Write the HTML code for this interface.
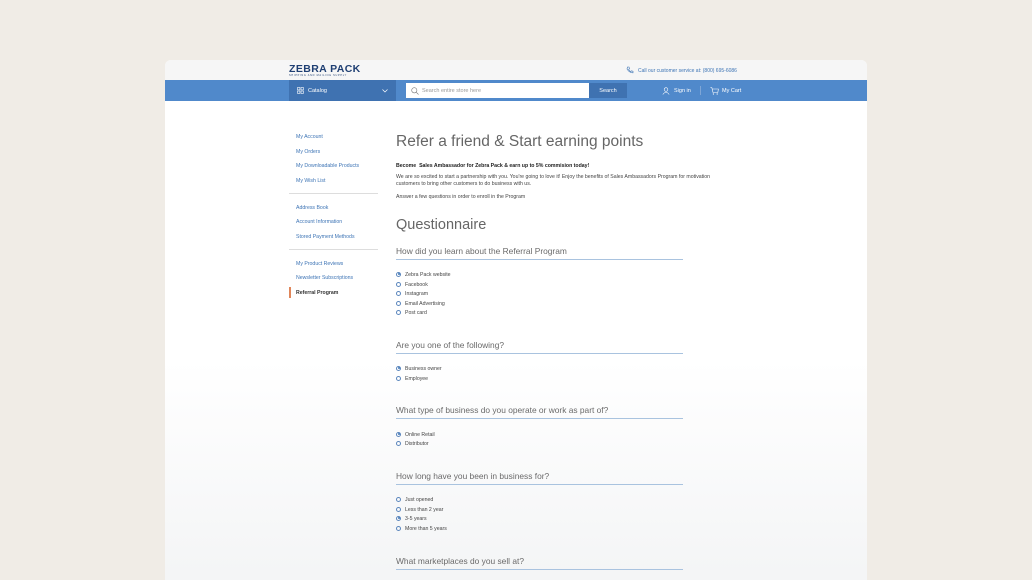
<!DOCTYPE html>
<html><head><style>
*{margin:0;padding:0;box-sizing:border-box}
body{width:1032px;height:573px;background:#f0ece6;font-family:"Liberation Sans",sans-serif;position:relative;overflow:hidden}
.card{position:absolute;left:165px;top:60px;width:702px;height:520px;background:linear-gradient(#fff 0,#fff 300px,#f4f5f6 513px);border-radius:6px 6px 0 0;overflow:hidden}
.hdr{position:absolute;left:0;top:0;width:702px;height:20px;background:#f6f6f6}
.nav{position:absolute;left:0;top:20px;width:702px;height:21px;background:#5089cb}
.a{position:absolute;white-space:nowrap}
.sl{position:absolute;left:131px;font-size:5.2px;color:#3d74b5}
.sep{position:absolute;left:124px;width:89px;height:1px;background:#ddd}
.q{position:absolute;left:231px;width:287px;font-size:8.4px;color:#6a6a6a;border-bottom:1px solid #a9c3df;height:13px;line-height:9px}
.r{position:absolute;left:231px;font-size:5.2px;color:#444;line-height:6px}
.r i{display:inline-block;width:5px;height:5px;border:0.7px solid #5b86bd;border-radius:50%;vertical-align:-1px;margin-right:4px;position:relative}
.r i.on::after{content:"";position:absolute;left:0.8px;top:0.8px;width:2.2px;height:2.2px;background:#3d74b5;border-radius:50%}
.m{position:absolute;left:0;top:1.5px;width:702px;height:520px}
</style></head><body>
<div class="card">
<div class="hdr">
 <div class="a" style="left:124px;top:3px;font-size:10.5px;font-weight:bold;color:#1f3f73;letter-spacing:0.4px">ZEBRA PACK</div>
 <div class="a" style="left:124px;top:13.5px;font-size:2.5px;color:#1f3f73;letter-spacing:0.7px">SHIPPING AND MAILING SUPPLY</div>
 <svg class="a" style="left:461px;top:6px" width="8" height="8" viewBox="0 0 8 8"><path d="M1.5 1 L3 1 L3.5 2.8 L2.6 3.4 Q3.5 5 4.8 5.6 L5.4 4.8 L7 5.2 L7 6.8 Q3.5 7 1 3 Z" fill="none" stroke="#3d74b5" stroke-width="0.6"/></svg>
 <div class="a" style="left:473px;top:7.5px;font-size:5px;color:#3d74b5">Call our customer service at: (800) 695-6086</div>
</div>
<div class="nav">
 <div class="a" style="left:124px;top:0;width:107px;height:21px;background:#3f72b1"></div>
 <svg class="a" style="left:132px;top:7px" width="7" height="7" viewBox="0 0 7 7"><g fill="none" stroke="#fff" stroke-width="0.6"><rect x="0.5" y="0.5" width="2.4" height="2.4"/><rect x="4" y="0.5" width="2.4" height="2.4"/><rect x="0.5" y="4" width="2.4" height="2.4"/><rect x="4" y="4" width="2.4" height="2.4"/></g></svg>
 <div class="a" style="left:143px;top:8px;font-size:5.5px;color:#fff">Catalog</div>
 <svg class="a" style="left:217px;top:9px" width="6" height="4" viewBox="0 0 6 4"><path d="M0.5 0.5 L3 3 L5.5 0.5" fill="none" stroke="#fff" stroke-width="0.7"/></svg>
 <div class="a" style="left:241px;top:3px;width:183px;height:15px;background:#fff"></div>
 <svg class="a" style="left:246px;top:6.5px" width="8" height="8" viewBox="0 0 8 8"><circle cx="3.3" cy="3.3" r="2.6" fill="none" stroke="#777" stroke-width="0.6"/><path d="M5.2 5.2 L7.5 7.5" stroke="#777" stroke-width="0.6"/></svg>
 <div class="a" style="left:257px;top:8px;font-size:5.5px;color:#999">Search entire store here</div>
 <div class="a" style="left:424px;top:3px;width:38px;height:15px;background:#3f72b1;color:#fff;font-size:5.5px;text-align:center;line-height:16px">Search</div>
 <svg class="a" style="left:497px;top:6.5px" width="8" height="8" viewBox="0 0 8 8"><circle cx="4" cy="2.5" r="1.8" fill="none" stroke="#fff" stroke-width="0.6"/><path d="M0.8 7.5 Q4 3 7.2 7.5" fill="none" stroke="#fff" stroke-width="0.6"/></svg>
 <div class="a" style="left:509px;top:8px;font-size:5.5px;color:#fff">Sign in</div>
 <div class="a" style="left:535px;top:6px;width:1px;height:9px;background:#7fa6d6"></div>
 <svg class="a" style="left:545px;top:6.5px" width="9" height="8" viewBox="0 0 9 8"><path d="M0.3 0.5 L1.8 0.5 L3 5.5 L7.8 5.5 L8.4 2 L2.2 2" fill="none" stroke="#fff" stroke-width="0.6"/><circle cx="3.4" cy="7" r="0.6" fill="#fff"/><circle cx="7.2" cy="7" r="0.6" fill="#fff"/></svg>
 <div class="a" style="left:557px;top:8px;font-size:5.5px;color:#fff">My Cart</div>
</div>
<div class="m">
<div class="sl" style="top:72px">My Account</div>
<div class="sl" style="top:87px">My Orders</div>
<div class="sl" style="top:101px">My Downloadable Products</div>
<div class="sl" style="top:116px">My Wish List</div>
<div class="sep" style="top:131px"></div>
<div class="sl" style="top:143px">Address Book</div>
<div class="sl" style="top:157px">Account Information</div>
<div class="sl" style="top:172px">Stored Payment Methods</div>
<div class="sep" style="top:187px"></div>
<div class="sl" style="top:199px">My Product Reviews</div>
<div class="sl" style="top:213px">Newsletter Subscriptions</div>
<div class="a" style="left:124px;top:225px;width:2px;height:11px;background:#e0865a"></div>
<div class="sl" style="top:228px;color:#333;font-weight:bold">Referral Program</div>

<div class="a" style="left:231px;top:71px;font-size:15.5px;color:#666">Refer a friend &amp; Start earning points</div>
<div class="a" style="left:231px;top:101px;font-size:5.2px;font-weight:bold;color:#222">Become&nbsp; Sales Ambassador for Zebra Pack &amp; earn up to 5% commision today!</div>
<div class="a" style="left:231px;top:112px;font-size:5.2px;color:#444;line-height:7.4px">We are so excited to start a partnership with you. You're going to love it! Enjoy the benefits of Sales Ambassadors Program for motivation<br>customers to bring other customers to do business with us.</div>
<div class="a" style="left:231px;top:132px;font-size:5.2px;color:#444">Answer a few questions in order to enroll in the Program</div>
<div class="a" style="left:231px;top:155px;font-size:14.5px;color:#666">Questionnaire</div>

<div class="q" style="top:185px">How did you learn about the Referral Program</div>
<div class="r" style="top:210px"><i class="on"></i>Zebra Pack website</div>
<div class="r" style="top:220px"><i></i>Facebook</div>
<div class="r" style="top:229px"><i></i>Instagram</div>
<div class="r" style="top:239px"><i></i>Email Advertising</div>
<div class="r" style="top:248px"><i></i>Post card</div>

<div class="q" style="top:279px">Are you one of the following?</div>
<div class="r" style="top:304px"><i class="on"></i>Business owner</div>
<div class="r" style="top:314px"><i></i>Employee</div>

<div class="q" style="top:344px">What type of business do you operate or work as part of?</div>
<div class="r" style="top:370px"><i class="on"></i>Online Retail</div>
<div class="r" style="top:379px"><i></i>Distributor</div>

<div class="q" style="top:410px">How long have you been in business for?</div>
<div class="r" style="top:435px"><i></i>Just opened</div>
<div class="r" style="top:445px"><i></i>Less than 2 year</div>
<div class="r" style="top:454px"><i class="on"></i>3-5 years</div>
<div class="r" style="top:464px"><i></i>More than 5 years</div>

<div class="q" style="top:495px">What marketplaces do you sell at?</div>
</div>
</div>
</body></html>
